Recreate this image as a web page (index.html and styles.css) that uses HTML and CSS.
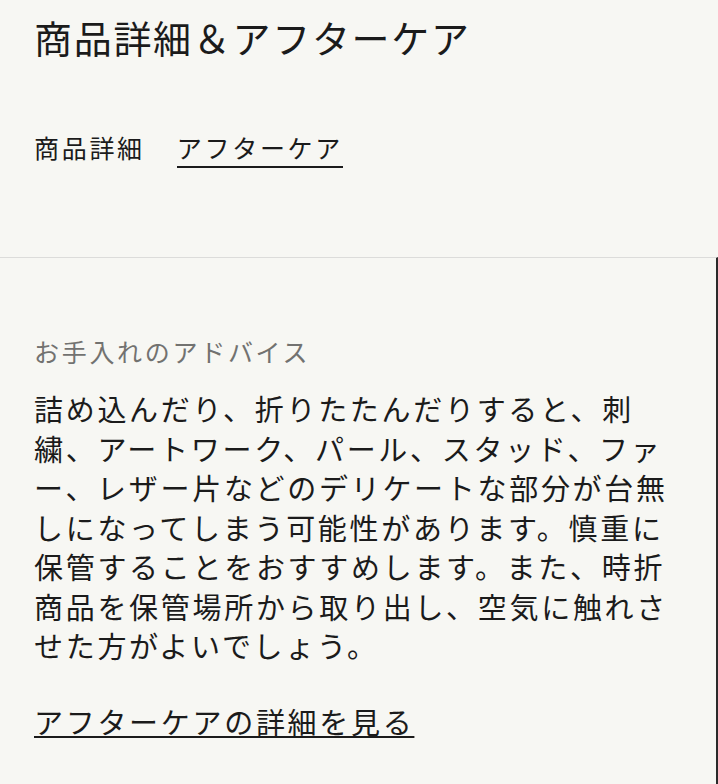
FILE: index.html
```html
<!DOCTYPE html>
<html lang="ja">

<head>
  <meta charset="UTF-8" />
  <meta name="viewport" content="width=device-width, initial-scale=1.0" />
  <title>商品詳細＆アフターケア</title>
  <link rel="stylesheet" href="styles.css">
</head>

<body>
  <div class="header">
    <h1 class="page-title">商品詳細＆アフターケア</h1>
    <div class="tabs">
      <a href="#" class="tab">商品詳細</a>
      <a href="#" class="tab active">アフターケア</a>
    </div>
  </div>

  <!-- After care panel -->
  <div class="panel">
    <h2 class="panel-title">お手入れのアドバイス</h2>
    <p class="panel-text">詰め込んだり、折りたたんだりすると、刺繍、アートワーク、パール、スタッド、ファー、レザー片などのデリケートな部分が台無しになってしまう可能性があります。慎重に保管することをおすすめします。また、時折商品を保管場所から取り出し、空気に触れさせた方がよいでしょう。</p>
    <a href="#" class="more-link">アフターケアの詳細を見る</a>
  </div>
</body>

</html>
```

FILE: styles.css
```css
/* General Styles */
body {
  font-family: "Noto Sans CJK JP", "Noto Sans", sans-serif;
  margin: 0;
  padding: 0;
  height: 100vh;
  display: flex;
  flex-direction: column;
  background: #f7f7f3;
  color: #1b1b1b;
}

/* Header Styles */
.header {
  padding: 12px 34px 89px;
}

.page-title {
  margin: 0;
  font-size: 38px;
  font-weight: 400;
  line-height: 50px;
  letter-spacing: 1.7px;
}

.tabs {
  display: flex;
  gap: 32px;
  margin-top: 68px;
}

.tab {
  font-size: 25px;
  line-height: 34px;
  letter-spacing: 2.7px;
  color: #1b1b1b;
  text-decoration: none;
  padding-bottom: 2px;
  border-bottom: 2px solid transparent;
}

.tab.active {
  border-bottom-color: #1b1b1b;
}

/* Panel Styles */
.panel {
  flex: 1;
  border-top: 1px solid #dcdcda;
  border-right: 2px solid #2a2a2a;
  padding: 76px 32px 0 34px;
}

.panel-title {
  margin: 0;
  font-size: 25px;
  font-weight: 400;
  line-height: 34px;
  letter-spacing: 2.7px;
  color: #727270;
}

.panel-text {
  margin: 21px 0 0;
  font-size: 29px;
  line-height: 39.5px;
  letter-spacing: 2.7px;
}

.more-link {
  display: inline-block;
  margin-top: 36px;
  font-size: 29px;
  line-height: 39.5px;
  letter-spacing: 2.7px;
  color: #1b1b1b;
  text-decoration: underline;
  text-decoration-thickness: 2px;
  text-underline-offset: 2px;
}
```
